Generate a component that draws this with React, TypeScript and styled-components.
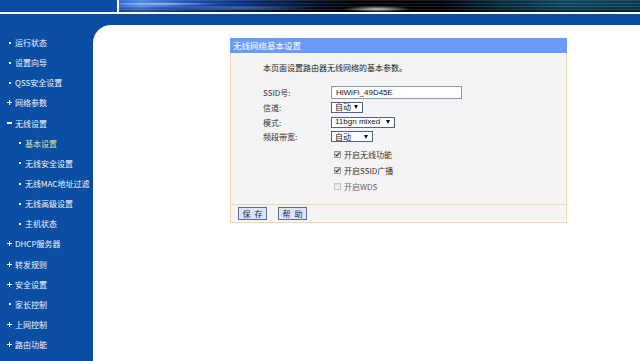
import styled, { createGlobalStyle } from "styled-components";

const GlobalStyle = createGlobalStyle`
  *, *::before, *::after {
    box-sizing: border-box;
  }
  html, body {
    margin: 0;
    padding: 0;
    background: #ffffff;
  }
  body {
    font-family: "Noto Sans CJK SC", "Liberation Sans", sans-serif;
  }
`;

type MarkerKind = "dot" | "plus" | "minus";

type NavEntry = {
  label: string;
  level: 0 | 1;
  marker: MarkerKind;
  active?: boolean;
};

const navEntries: NavEntry[] = [
  { label: "运行状态", level: 0, marker: "dot" },
  { label: "设置向导", level: 0, marker: "dot" },
  { label: "QSS安全设置", level: 0, marker: "dot" },
  { label: "网络参数", level: 0, marker: "plus" },
  { label: "无线设置", level: 0, marker: "minus" },
  { label: "基本设置", level: 1, marker: "dot", active: true },
  { label: "无线安全设置", level: 1, marker: "dot" },
  { label: "无线MAC地址过滤", level: 1, marker: "dot" },
  { label: "无线高级设置", level: 1, marker: "dot" },
  { label: "主机状态", level: 1, marker: "dot" },
  { label: "DHCP服务器", level: 0, marker: "plus" },
  { label: "转发规则", level: 0, marker: "plus" },
  { label: "安全设置", level: 0, marker: "plus" },
  { label: "家长控制", level: 0, marker: "dot" },
  { label: "上网控制", level: 0, marker: "plus" },
  { label: "路由功能", level: 0, marker: "plus" }
];

const Page = styled.div`
  width: 640px;
  height: 361px;
  overflow: hidden;
  display: flex;
  flex-direction: column;
  background: #ffffff;
`;

const Banner = styled.div`
  height: 12px;
  flex-shrink: 0;
  display: flex;
  gap: 2px;
  background: #ffffff;
`;

const BannerLeft = styled.div`
  width: 117px;
  background: #0b4ba2;
`;

const BannerArt = styled.div`
  flex: 1;
  background:
    radial-gradient(ellipse 34px 3px at 258px 9px, rgba(225, 232, 240, 0.85), transparent),
    radial-gradient(ellipse 60px 2px at 40px 4px, rgba(190, 215, 255, 0.75), transparent),
    radial-gradient(ellipse 80px 2px at 120px 8px, rgba(120, 170, 240, 0.5), transparent),
    repeating-linear-gradient(180deg, rgba(255, 255, 255, 0.1) 0 1px, transparent 1px 3px),
    linear-gradient(180deg, transparent 55%, rgba(0, 0, 0, 0.45) 100%),
    linear-gradient(
      90deg,
      #2f66d0 0%,
      #4d82e4 4%,
      #1f52b8 12%,
      #0c2f7a 24%,
      #04102c 36%,
      #000000 46%,
      #01040a 62%,
      #062536 72%,
      #0c465c 86%,
      #0a3a4e 100%
    );
`;

const Rule = styled.div`
  height: 2px;
  flex-shrink: 0;
  background: #ffffff;
`;

const Main = styled.div`
  flex: 1;
  display: flex;
  background: #0a4ea4;
  padding-top: 11px;
`;

const Sidebar = styled.nav`
  width: 93px;
  flex-shrink: 0;
  padding-top: 7.5px;
  display: flex;
  flex-direction: column;
`;

const NavItem = styled.div<{ $level: 0 | 1; $active?: boolean }>`
  height: 20.15px;
  flex-shrink: 0;
  display: flex;
  align-items: center;
  padding-left: ${(p) => (p.$level === 1 ? 17 : 7)}px;
  color: ${(p) => (p.$active ? "#e4e2a2" : "#f4f6fa")};
  font-size: 8px;
  white-space: nowrap;
`;

const MarkerBox = styled.span`
  width: 5px;
  height: 5px;
  margin-right: 3px;
  display: inline-flex;
  align-items: center;
  justify-content: center;
  flex-shrink: 0;
`;

const Dot = styled.span`
  width: 2px;
  height: 2px;
  background: #ffffff;
`;

const Dash = styled.span`
  width: 5px;
  height: 1.5px;
  background: #ffffff;
`;

function Marker({ kind }: { kind: MarkerKind }) {
  return (
    <MarkerBox>
      {kind === "dot" ? <Dot /> : null}
      {kind === "minus" ? <Dash /> : null}
      {kind === "plus" ? (
        <svg width="5" height="5" viewBox="0 0 5 5">
          <path d="M2 0h1v2h2v1H3v2H2V3H0V2h2z" fill="#ffffff" />
        </svg>
      ) : null}
    </MarkerBox>
  );
}

const Content = styled.main`
  flex: 1;
  background: #ffffff;
  border-top-left-radius: 18px;
  padding: 13px 0 0 137px;
`;

const Panel = styled.section`
  width: 337px;
  display: flex;
  flex-direction: column;
`;

const PanelTitle = styled.div`
  height: 15px;
  background: #6a9bfa;
  color: #ffffff;
  font-size: 8.5px;
  line-height: 15px;
  padding-left: 3px;
`;

const PanelBody = styled.div`
  height: 152px;
  background: #f4f4f4;
  border: 1px solid #f2d7a8;
  border-top: none;
  padding: 10px 0 0 32px;
  color: #222222;
  font-size: 8px;
`;

const Intro = styled.div`
  height: 10px;
  line-height: 10px;
`;

const Form = styled.div`
  margin-top: 11px;
  display: flex;
  flex-direction: column;
`;

const FieldRow = styled.div<{ $height: number }>`
  height: ${(p) => p.$height}px;
  display: grid;
  grid-template-columns: 68px 1fr;
  align-items: center;
`;

const Label = styled.span`
  color: #333333;
`;

const TextInput = styled.div`
  width: 131px;
  height: 13px;
  border: 1px solid #7f9db9;
  background: #ffffff;
  font-family: "Liberation Sans", Arial, sans-serif;
  font-size: 8px;
  line-height: 11px;
  padding-left: 4px;
  color: #111111;
`;

const SelectBox = styled.div<{ $width: number }>`
  width: ${(p) => p.$width}px;
  height: 11px;
  border: 1px solid #4f5f8f;
  background: #ffffff;
  display: flex;
  align-items: center;
  justify-content: space-between;
  padding: 0 4px 0 3px;
  font-size: 8px;
  line-height: 8px;
  color: #111111;
`;

const LatinText = styled.span`
  font-family: "Liberation Sans", Arial, sans-serif;
  font-size: 8px;
`;

const Arrow = styled.span`
  width: 0;
  height: 0;
  border-left: 2.5px solid transparent;
  border-right: 2.5px solid transparent;
  border-top: 4px solid #111111;
`;

const CheckRow = styled.div<{ $first?: boolean }>`
  height: 16.3px;
  margin-top: ${(p) => (p.$first ? 2 : 0)}px;
  display: flex;
  align-items: center;
  padding-left: 71px;
  gap: 3px;
`;

const CheckBox = styled.span<{ $checked: boolean }>`
  width: 7px;
  height: 7px;
  border: 1px solid ${(p) => (p.$checked ? "#9a9a9a" : "#c4c4c4")};
  background: ${(p) => (p.$checked ? "linear-gradient(#d6d6d6, #f2f2f2)" : "linear-gradient(#e4e4e4, #f6f6f6)")};
  display: inline-flex;
  align-items: center;
  justify-content: center;
`;

const CheckLabel = styled.span<{ $muted?: boolean }>`
  color: ${(p) => (p.$muted ? "#666666" : "#333333")};
`;

const PanelFooter = styled.div`
  height: 18px;
  background: #f4f4f4;
  border: 1px solid #f2d7a8;
  border-top: none;
  display: flex;
  align-items: center;
  gap: 11px;
  padding-left: 7px;
`;

const FormButton = styled.button`
  width: 29px;
  height: 13px;
  padding: 0;
  border: 1px solid #5a6c9c;
  background: #dfe5f0;
  color: #14285e;
  font-family: "Noto Sans CJK SC", sans-serif;
  font-size: 8px;
  line-height: 11px;
  letter-spacing: 1px;
  text-indent: 1px;
`;

function Check({ checked }: { checked: boolean }) {
  return (
    <CheckBox $checked={checked}>
      {checked ? (
        <svg width="5" height="5" viewBox="0 0 5 5">
          <path d="M0.5 2.6 L1.9 4 L4.6 0.6" stroke="#2a2a2a" strokeWidth="1.1" fill="none" />
        </svg>
      ) : null}
    </CheckBox>
  );
}

export default function App() {
  return (
    <>
      <GlobalStyle />
      <Page>
        <Banner>
          <BannerLeft />
          <BannerArt />
        </Banner>
        <Rule />
        <Main>
          <Sidebar>
            {navEntries.map((entry) => (
              <NavItem key={entry.label} $level={entry.level} $active={entry.active}>
                <Marker kind={entry.marker} />
                {entry.label}
              </NavItem>
            ))}
          </Sidebar>
          <Content>
            <Panel>
              <PanelTitle>无线网络基本设置</PanelTitle>
              <PanelBody>
                <Intro>本页面设置路由器无线网络的基本参数。</Intro>
                <Form>
                  <FieldRow $height={16}>
                    <Label>SSID号:</Label>
                    <TextInput>HiWiFi_49D45E</TextInput>
                  </FieldRow>
                  <FieldRow $height={14.7}>
                    <Label>信道:</Label>
                    <SelectBox $width={32}>
                      自动
                      <Arrow />
                    </SelectBox>
                  </FieldRow>
                  <FieldRow $height={14.7}>
                    <Label>模式:</Label>
                    <SelectBox $width={64}>
                      <LatinText>11bgn mixed</LatinText>
                      <Arrow />
                    </SelectBox>
                  </FieldRow>
                  <FieldRow $height={14.7}>
                    <Label>频段带宽:</Label>
                    <SelectBox $width={42}>
                      自动
                      <Arrow />
                    </SelectBox>
                  </FieldRow>
                  <CheckRow $first>
                    <Check checked />
                    <CheckLabel>开启无线功能</CheckLabel>
                  </CheckRow>
                  <CheckRow>
                    <Check checked />
                    <CheckLabel>开启SSID广播</CheckLabel>
                  </CheckRow>
                  <CheckRow>
                    <Check checked={false} />
                    <CheckLabel $muted>开启WDS</CheckLabel>
                  </CheckRow>
                </Form>
              </PanelBody>
              <PanelFooter>
                <FormButton>保 存</FormButton>
                <FormButton>帮 助</FormButton>
              </PanelFooter>
            </Panel>
          </Content>
        </Main>
      </Page>
    </>
  );
}
